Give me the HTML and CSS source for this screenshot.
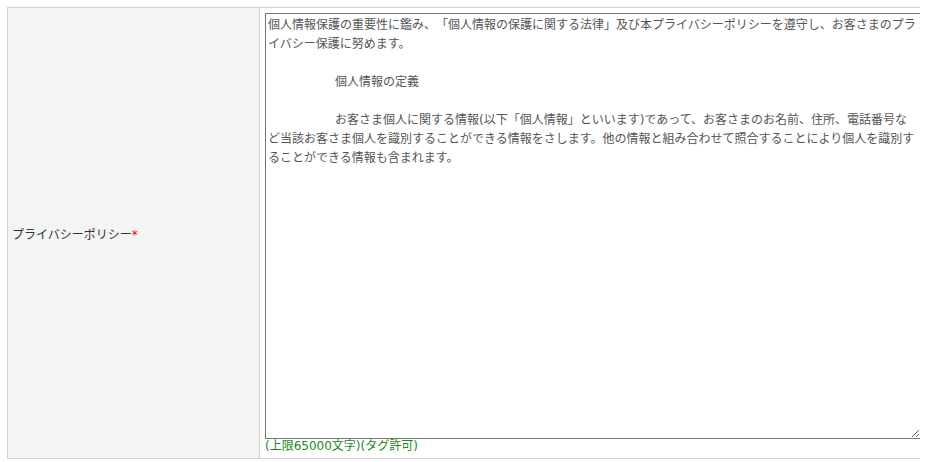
FILE: index.html
```html
<!DOCTYPE html>
<html lang="ja">
<head>
    <meta charset="utf-8">
    <link rel="stylesheet" href="styles.css">
</head>
<body>

<table class="form-table">
    <tr>
        <th>プライバシーポリシー<span class="req">*</span></th>
        <td>
            <textarea name="privacy" id="privacy">個人情報保護の重要性に鑑み、「個人情報の保護に関する法律」及び本プライバシーポリシーを遵守し、お客さまのプライバシー保護に努めます。

	個人情報の定義

	お客さま個人に関する情報(以下「個人情報」といいます)であって、お客さまのお名前、住所、電話番号など当該お客さま個人を識別することができる情報をさします。他の情報と組み合わせて照合することにより個人を識別することができる情報も含まれます。</textarea>
            <div class="note">(上限65000文字)(タグ許可)</div>
        </td>
    </tr>
</table>

</body>
</html>
```

FILE: styles.css
```css
body {
  margin: 7px;
  font-family: "DejaVu Sans", "Noto Sans CJK JP", sans-serif;
  font-size: 12px;
  color: #333;
  background: #fff;
  text-spacing-trim: space-all;
}

.form-table {
  border-collapse: separate;
  border-spacing: 0;
  width: 940px;
}

.form-table th {
  width: 243px;
  padding: 0 4px;
  background-color: #f3f4f4;
  border: 1px solid #d3d3d3;
  text-align: left;
  font-weight: normal;
  vertical-align: middle;
}

.form-table td {
  padding: 5px 5px 5px 5px;
  border: 1px solid #d3d3d3;
  border-left: none;
  vertical-align: top;
}

.req {
  color: #e00;
}

textarea {
  display: block;
  box-sizing: border-box;
  width: 656px;
  height: 426px;
  margin: 0;
  padding: 2px 4px 2px 2px;
  border: 1px solid #767676;
  font-family: "DejaVu Sans", "Noto Sans CJK JP", sans-serif;
  font-size: 12px;
  line-height: 19px;
  color: #555;
  tab-size: 67px;
  text-spacing-trim: space-all;
}

.note {
  color: #1a8a1a;
  line-height: 14px;
}
```
